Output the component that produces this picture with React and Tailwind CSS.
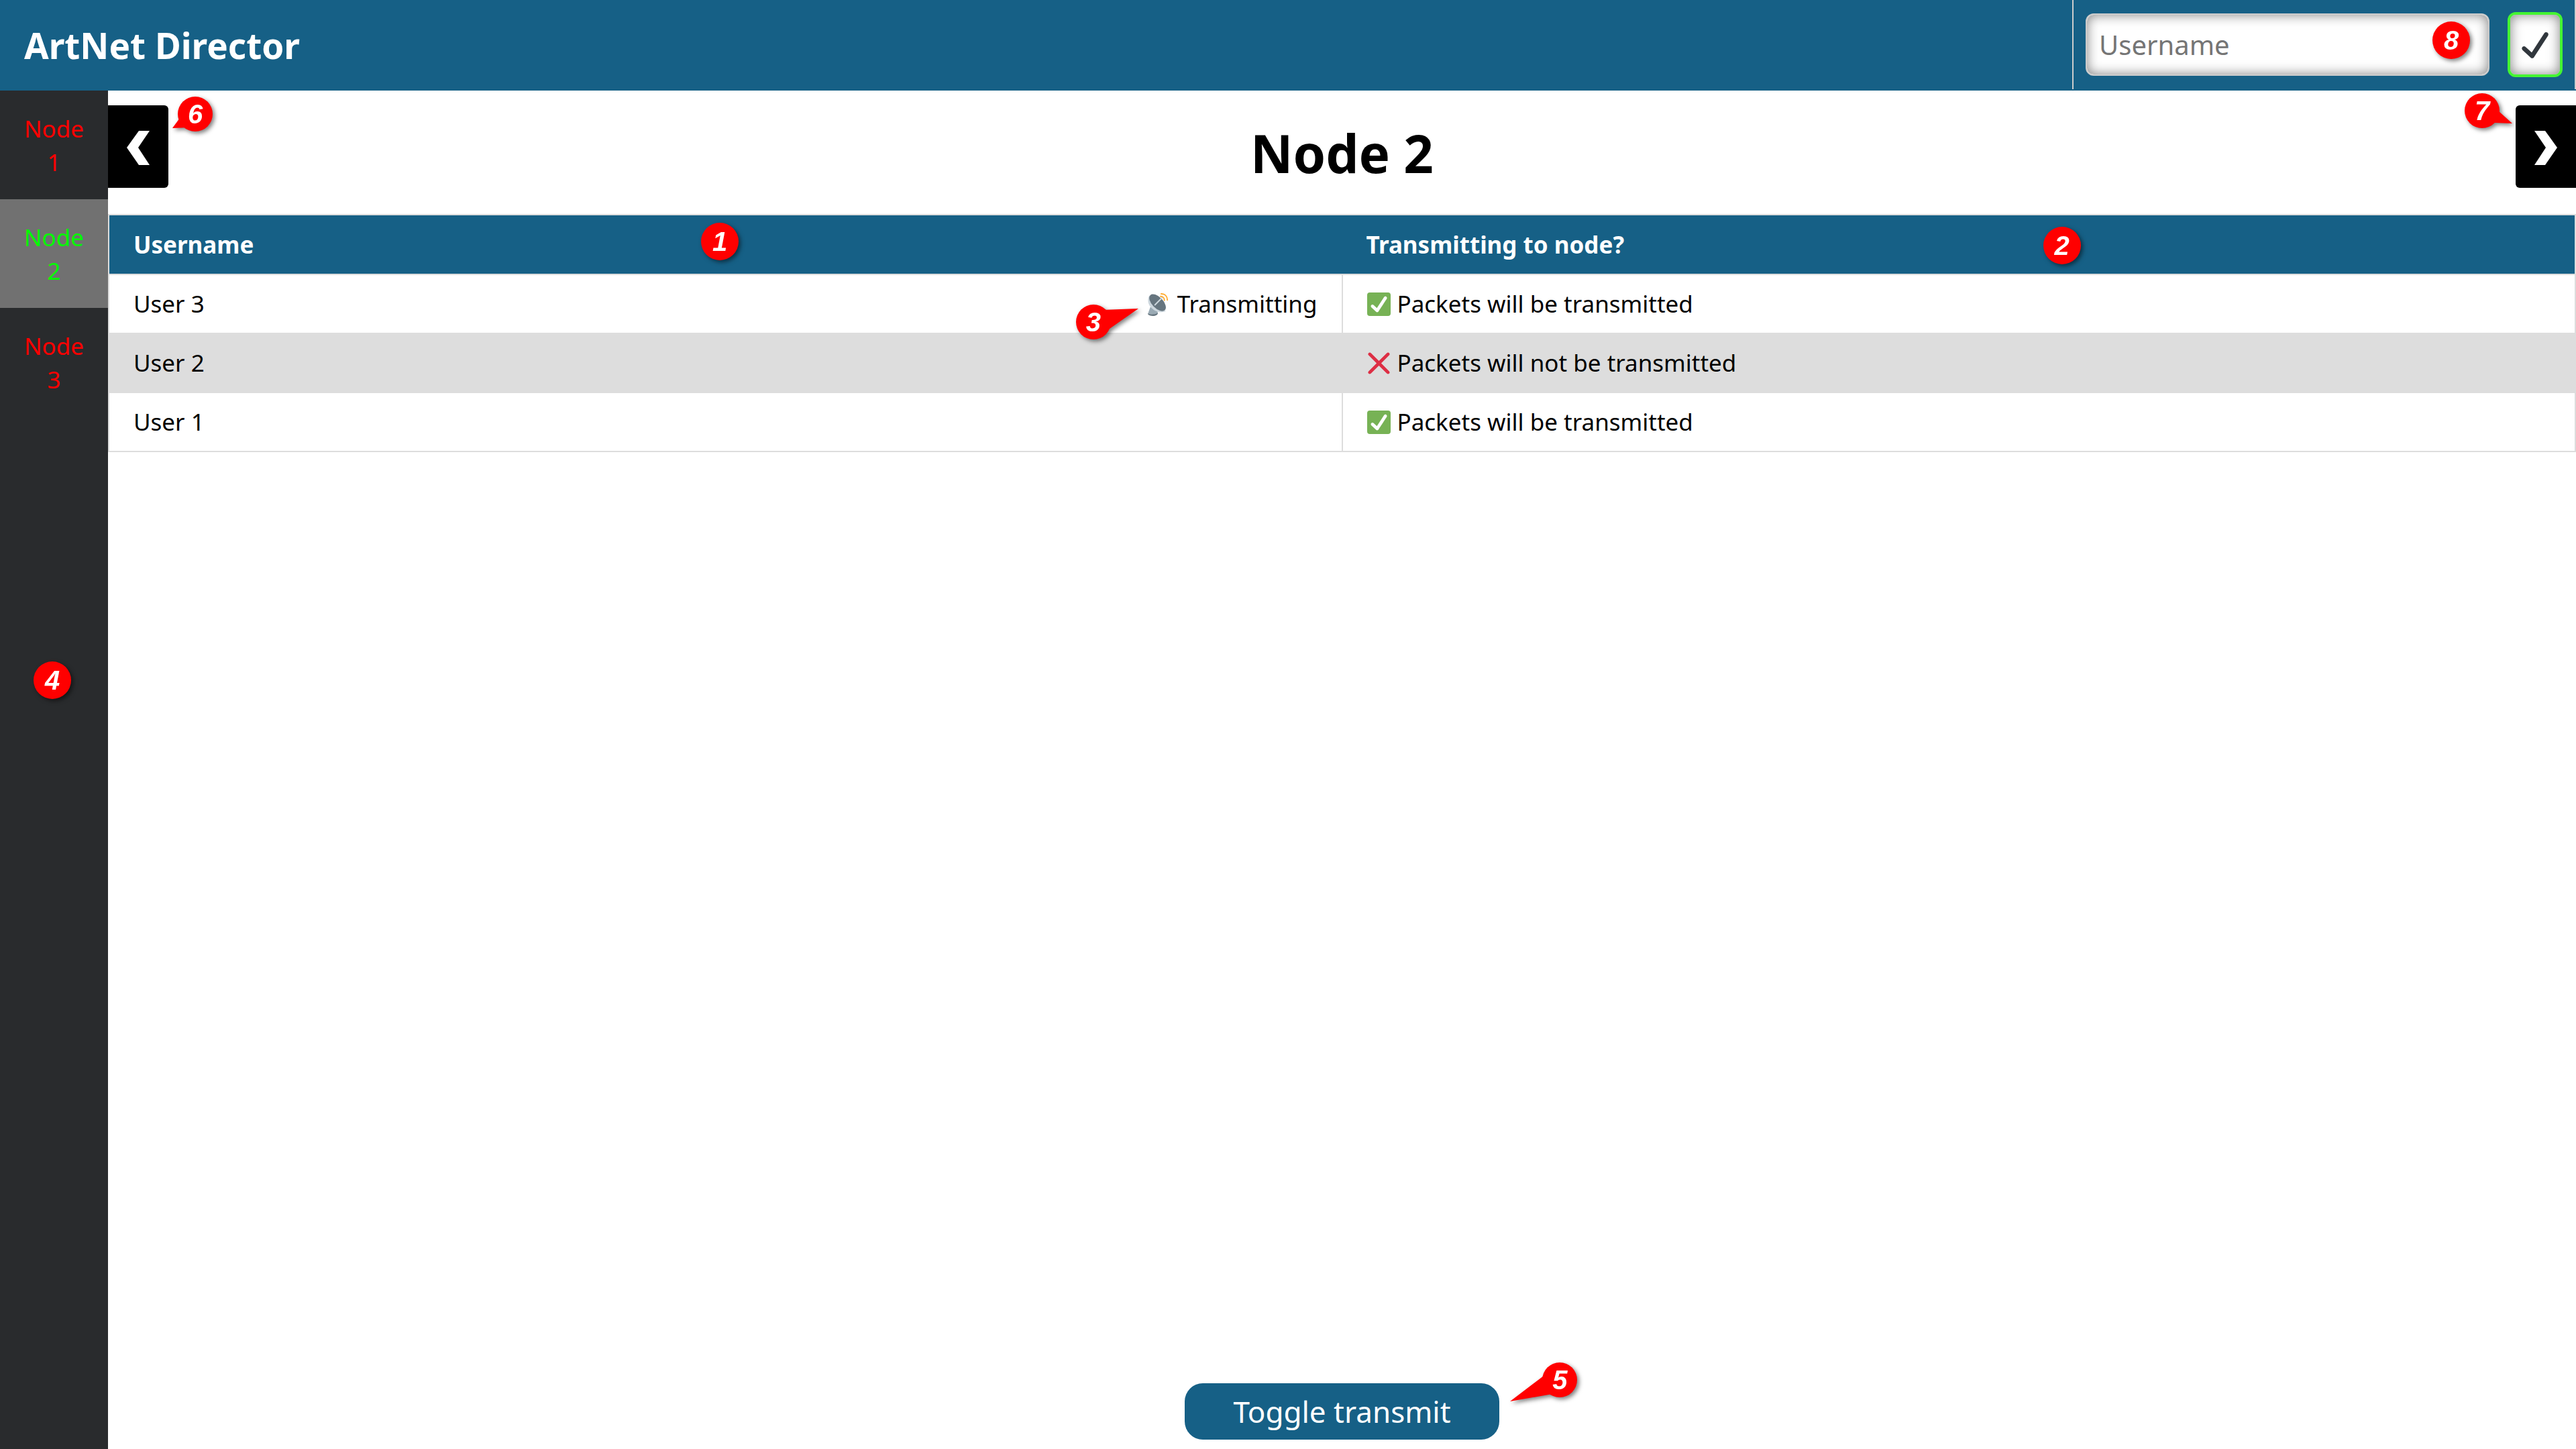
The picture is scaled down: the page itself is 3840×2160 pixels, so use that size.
const nodes = [
  { label: "Node 1", active: false },
  { label: "Node 2", active: true },
  { label: "Node 3", active: false },
];

const users = [
  { name: "User 3", transmitting: true, allowed: true },
  { name: "User 2", transmitting: false, allowed: false },
  { name: "User 1", transmitting: false, allowed: true },
];

function AllowedIcon() {
  return (
    <svg viewBox="0 0 36 36" className="size-[35px] shrink-0" aria-hidden="true">
      <rect width="36" height="36" rx="4" fill="#77B255" />
      <path
        fill="#fff"
        d="M29.28 6.362c-1.156-.751-2.704-.422-3.458.736L14.936 23.877l-5.029-4.65c-1.014-.938-2.596-.875-3.533.138-.937 1.014-.875 2.596.139 3.533l7.209 6.666c.48.445 1.09.665 1.696.665.673 0 1.534-.282 2.099-1.139.332-.506 12.5-19.27 12.5-19.27.751-1.159.421-2.707-.737-3.458z"
      />
    </svg>
  );
}

function DeniedIcon() {
  return (
    <svg viewBox="0 0 36 36" className="size-[35px] shrink-0" aria-hidden="true">
      <path
        fill="#DD2E44"
        d="M21.533 18.002L33.768 5.768c.976-.976.976-2.559 0-3.535-.977-.977-2.559-.977-3.535 0L17.998 14.467 5.764 2.233c-.976-.977-2.56-.977-3.535 0-.977.976-.977 2.559 0 3.535l12.234 12.234L2.201 30.265c-.977.977-.977 2.559 0 3.535.488.488 1.128.732 1.768.732s1.28-.244 1.768-.732l12.262-12.262 12.234 12.234c.488.488 1.128.732 1.768.732.64 0 1.279-.244 1.768-.732.976-.977.976-2.559 0-3.535L21.533 18.002z"
      />
    </svg>
  );
}

function SatelliteIcon() {
  return (
    <svg viewBox="0 0 36 36" className="size-[35px] shrink-0" aria-hidden="true">
      <path fill="#9AAAB4" d="M5 22L1.500 32c0 2 3 3.500 7.500 3.500s7.500-1.500 7.500-3.500l-1-5z" />
      <path fill="#66757F" d="M1 32c2 1.500 5 2 8 1.500 3 0 5.500-1 7-2.500 1 3-3 5-7.500 5S1 34.500 1 32z" />
      <path fill="#CCD6DD" d="M3.500 4.500C.5 9 .5 17 6 23c6 7 15 9 22.500 5.500z" />
      <ellipse cx="16" cy="15.500" rx="16" ry="8.500" transform="rotate(46 16 15.500)" fill="#66757F" />
      <path stroke="#CCD6DD" strokeWidth="2" strokeLinecap="round" d="M12 19L23 8" />
      <path
        fill="none"
        stroke="#FFAC33"
        strokeWidth="2"
        strokeLinecap="round"
        d="M20.500 6c3.500 0 6 2.500 6 6M21.500 2c6 0 9.500 4 9.500 9.500"
      />
    </svg>
  );
}

function TickIcon() {
  return (
    <svg viewBox="0 0 36 36" className="size-10" aria-hidden="true">
      <path
        fill="#31373D"
        d="M34.459 1.375c-1.391-.902-3.248-.506-4.149.884L13.5 28.17l-8.198-7.58c-1.217-1.125-3.114-1.051-4.239.166-1.125 1.216-1.051 3.114.166 4.239l10.764 9.952s.309.266.452.359c.504.328 1.07.484 1.63.484.982 0 1.945-.482 2.52-1.368L35.343 5.524c.902-1.39.506-3.248-.884-4.149z"
      />
    </svg>
  );
}

function Callout({ number, className, small, children }) {
  return (
    <div className={"pointer-events-none absolute drop-shadow-[3px_3px_3px_rgba(0,0,0,0.5)] " + className}>
      {children}
      <span
        className={
          "relative flex items-center justify-center rounded-full bg-[#ff0000] font-['Liberation_Sans',sans-serif] text-[40px] leading-none font-bold text-white italic " +
          (small ? "size-[52px]" : "size-14")
        }
      >
        {number}
      </span>
    </div>
  );
}

function Pointer({ points }) {
  return (
    <svg viewBox="0 0 52 52" className="absolute inset-0 size-[52px] overflow-visible" aria-hidden="true">
      <polygon points={points} fill="#ff0000" />
    </svg>
  );
}

export default function App() {
  return (
    <div className="relative flex min-h-screen flex-col bg-white font-['Noto_Sans',sans-serif] text-[35px] leading-[50px] text-black">
      <header className="flex h-[135px] items-start justify-between bg-[#166086]">
        <h1 className="pl-9 text-[53px] leading-[135px] font-bold text-white">ArtNet Director</h1>
        <form className="relative flex h-[133px] items-center gap-[27px] border-x-2 border-[#cccccc] pr-[18px] pl-[18px]">
          <input
            type="text"
            aria-label="Username"
            placeholder="Username"
            className="h-[93px] w-[602px] rounded-xl border-2 border-[#cccccc] bg-white px-[18px] text-[40px] placeholder:text-[#757575] shadow-[inset_0_0_18px_rgba(0,0,0,0.5)]"
          />
          <button
            type="button"
            aria-label="Confirm username"
            className="flex h-[97px] w-[82px] items-center justify-center rounded-xl border-4 border-[#44f532] bg-white shadow-[inset_0_0_18px_rgba(0,0,0,0.5)]"
          >
            <TickIcon />
          </button>
          <Callout number="8" className="top-[32px] left-[535px]" />
        </form>
      </header>

      <div className="flex grow">
        <nav className="relative w-[161px] shrink-0 bg-[#292b2d]">
          {nodes.map((node) => (
            <a
              key={node.label}
              href="#"
              className={
                "block px-7 pt-[32px] pb-[30px] text-center " +
                (node.active ? "bg-[#717171] text-[#00ff00]" : "text-[#ff0000]")
              }
            >
              {node.label}
            </a>
          ))}
          <Callout number="4" className="top-[851px] left-[50px]" />
        </nav>

        <main className="relative flex grow flex-col">
          <div className="flex h-[184px] items-start justify-between pt-[22px]">
            <div className="relative">
              <button
                type="button"
                aria-label="Previous node"
                className="flex h-[123px] w-[90px] items-center justify-center rounded-r-md bg-black pt-1"
              >
                <svg viewBox="0 0 34 51" className="h-[51px] w-[34px]" aria-hidden="true">
                  <polygon points="18,0 34,0 17,25 34,51 18,51 0,25" fill="#fff" />
                </svg>
              </button>
              <Callout number="6" small className="-top-[13px] left-[104px]">
                <Pointer points="-8,47 3,32 18,46" />
              </Callout>
            </div>
            <h2 className="text-[78px] leading-[142px] font-bold">Node 2</h2>
            <div className="relative">
              <button
                type="button"
                aria-label="Next node"
                className="flex h-[123px] w-[90px] items-center justify-center rounded-l-md bg-black pt-1"
              >
                <svg viewBox="0 0 34 51" className="h-[51px] w-[34px]" aria-hidden="true">
                  <polygon points="0,0 16,0 34,25 16,51 0,51 17,25" fill="#fff" />
                </svg>
              </button>
              <Callout number="7" small className="-top-[18px] -left-[76px]">
                <Pointer points="71,45 44,44 51,27" />
              </Callout>
            </div>
          </div>

          <table className="w-full table-fixed border-collapse border-2 border-[#dddddd] text-left">
            <thead className="bg-[#166086] text-white">
              <tr className="h-[89px]">
                <th scope="col" className="relative px-9 font-bold">
                  Username
                  <Callout number="1" className="top-[11px] left-[882px]" />
                </th>
                <th scope="col" className="relative px-9 font-bold">
                  Transmitting to node?
                  <Callout number="2" className="top-[17px] left-[1045px]" />
                </th>
              </tr>
            </thead>
            <tbody>
              {users.map((user) => (
                <tr key={user.name} className="h-[88px] even:bg-[#dddddd]">
                  <td className="border-2 border-[#dddddd] px-9">
                    <div className="flex justify-between">
                      <span>{user.name}</span>
                      {user.transmitting && (
                        <span className="relative flex items-center gap-2.5">
                          <SatelliteIcon />
                          Transmitting
                          <Callout number="3" small className="top-[26px] -left-[106px]">
                            <Pointer points="93,6 40,8 50,36" />
                          </Callout>
                        </span>
                      )}
                    </div>
                  </td>
                  <td className="border-2 border-[#dddddd] px-9">
                    <div className="flex items-center gap-2.5">
                      {user.allowed ? <AllowedIcon /> : <DeniedIcon />}
                      {user.allowed ? "Packets will be transmitted" : "Packets will not be transmitted"}
                    </div>
                  </td>
                </tr>
              ))}
            </tbody>
          </table>

          <div className="mt-auto flex justify-center pb-3.5">
            <div className="relative">
              <button
                type="button"
                className="h-[84px] rounded-[27px] bg-[#166086] px-[72px] text-[44px] text-white"
              >
                Toggle transmit
              </button>
              <Callout number="5" small className="-top-[31px] left-[533px]">
                <Pointer points="-48,58 2,20 15,47" />
              </Callout>
            </div>
          </div>
        </main>
      </div>
    </div>
  );
}
